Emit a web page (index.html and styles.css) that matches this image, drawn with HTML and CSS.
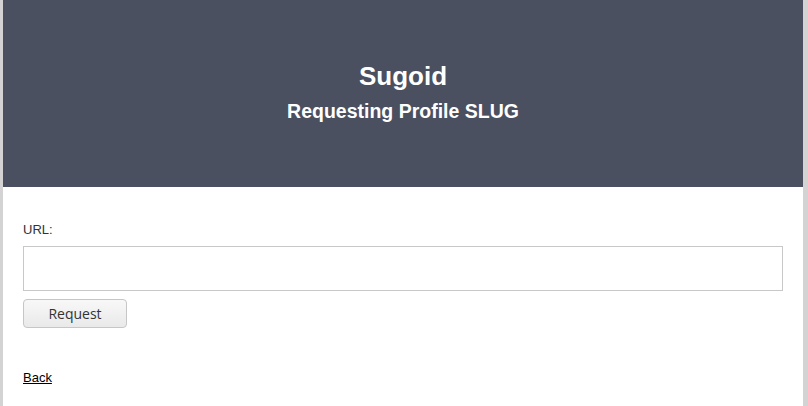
FILE: index.html
```html
<!DOCTYPE html>
<html>
<head>
<meta charset="utf-8">
<title>Sugoid</title>
<link rel="stylesheet" href="styles.css">
</head>
<body>
<div class="page">
  <header class="hero">
    <h1 class="title">Sugoid</h1>
    <h2 class="subtitle">Requesting Profile SLUG</h2>
  </header>
  <main class="content">
    <form class="form">
      <label class="label" for="url">URL:</label>
      <input class="input" id="url" type="text">
      <button class="btn" type="button">Request</button>
    </form>
    <a class="back" href="#">Back</a>
  </main>
</div>
</body>
</html>
```

FILE: styles.css
```css
html, body {
  margin: 0;
  padding: 0;
  background: #d3d3d3;
  height: 100%;
}
body {
  font-family: "Liberation Sans", Arial, sans-serif;
}
.page {
  width: 800px;
  margin-left: 3px;
  background: #ffffff;
  min-height: 100%;
}
.hero {
  background: #4a505f;
  height: 187px;
  display: flex;
  flex-direction: column;
  align-items: center;
  justify-content: flex-start;
  box-sizing: border-box;
  color: #ffffff;
}
.title {
  margin: 61px 0 0;
  font-size: 26px;
  line-height: 30px;
  font-weight: bold;
}
.subtitle {
  margin: 8px 0 0;
  font-size: 19.5px;
  line-height: 24px;
  font-weight: bold;
}
.content {
  padding: 35px 20px 20px;
}
.form {
  display: flex;
  flex-direction: column;
  align-items: flex-start;
}
.label {
  font-size: 13px;
  line-height: 15px;
  color: #333333;
  margin-bottom: 9px;
}
.input {
  width: 760px;
  height: 45px;
  box-sizing: border-box;
  border: 1px solid #c8c8c8;
  margin: 0 0 8px;
  padding: 4px 8px;
  font-size: 14px;
  outline: none;
}
.btn {
  width: 104px;
  height: 29px;
  box-sizing: border-box;
  border: 1px solid #c6c6c6;
  border-radius: 4px;
  background: linear-gradient(#f8f8f8, #e9e9e9);
  font-family: "Open Sans", sans-serif;
  font-size: 14px;
  color: #333333;
  padding: 0;
  margin: 0;
}
.back {
  display: inline-block;
  margin-top: 42px;
  font-size: 13px;
  line-height: 15px;
  color: #000000;
  text-decoration: underline;
}
```
